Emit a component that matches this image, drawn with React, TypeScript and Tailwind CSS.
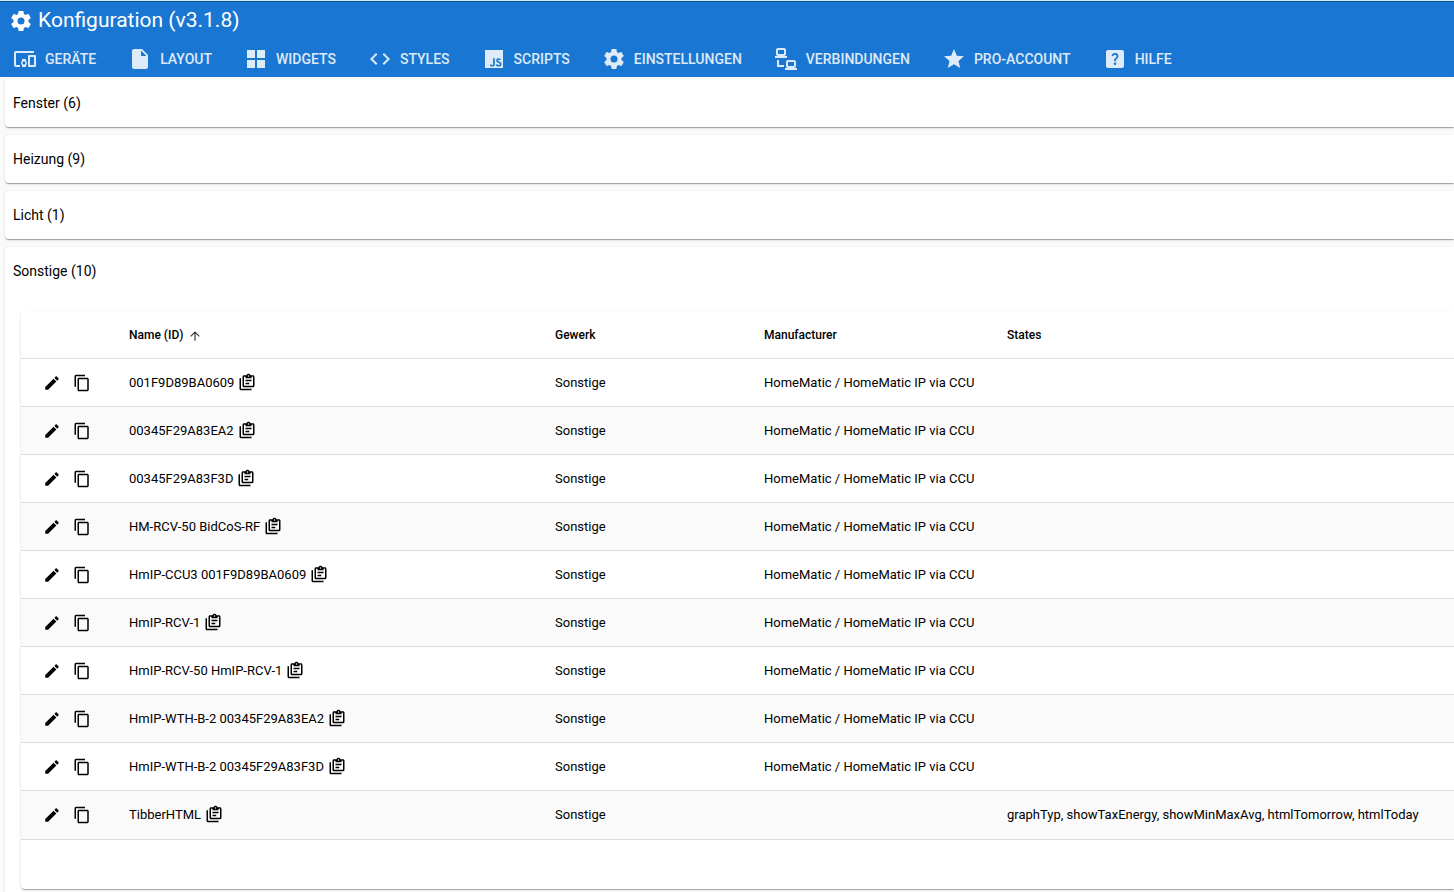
import { useState } from 'react';
import type { ReactNode } from 'react';
import {
  MdArrowUpward,
  MdCode,
  MdContentCopy,
  MdDevicesOther,
  MdEdit,
  MdHelpCenter,
  MdStar,
} from 'react-icons/md';
import { SiJavascript } from 'react-icons/si';

interface Device {
  name: string;
  manufacturer: string;
  states: string;
}

interface Group {
  name: string;
  count: number;
  devices: Device[];
}

const CCU = 'HomeMatic / HomeMatic IP via CCU';

const groups: Group[] = [
  { name: 'Fenster', count: 6, devices: [] },
  { name: 'Heizung', count: 9, devices: [] },
  { name: 'Licht', count: 1, devices: [] },
  {
    name: 'Sonstige',
    count: 10,
    devices: [
      { name: '001F9D89BA0609', manufacturer: CCU, states: '' },
      { name: '00345F29A83EA2', manufacturer: CCU, states: '' },
      { name: '00345F29A83F3D', manufacturer: CCU, states: '' },
      { name: 'HM-RCV-50 BidCoS-RF', manufacturer: CCU, states: '' },
      { name: 'HmIP-CCU3 001F9D89BA0609', manufacturer: CCU, states: '' },
      { name: 'HmIP-RCV-1', manufacturer: CCU, states: '' },
      { name: 'HmIP-RCV-50 HmIP-RCV-1', manufacturer: CCU, states: '' },
      { name: 'HmIP-WTH-B-2 00345F29A83EA2', manufacturer: CCU, states: '' },
      { name: 'HmIP-WTH-B-2 00345F29A83F3D', manufacturer: CCU, states: '' },
      {
        name: 'TibberHTML',
        manufacturer: '',
        states: 'graphTyp, showTaxEnergy, showMinMaxAvg, htmlTomorrow, htmlToday',
      },
    ],
  },
];

const icons = {
  cog: 'M12,15.5A3.5,3.5 0 0,1 8.5,12A3.5,3.5 0 0,1 12,8.5A3.5,3.5 0 0,1 15.5,12A3.5,3.5 0 0,1 12,15.5M19.43,12.97C19.47,12.65 19.5,12.33 19.5,12C19.5,11.67 19.47,11.34 19.43,11L21.54,9.37C21.73,9.22 21.78,8.95 21.66,8.73L19.66,5.27C19.54,5.05 19.27,4.96 19.05,5.05L16.56,6.05C16.04,5.66 15.5,5.32 14.87,5.07L14.5,2.42C14.46,2.18 14.25,2 14,2H10C9.75,2 9.54,2.18 9.5,2.42L9.13,5.07C8.5,5.32 7.96,5.66 7.44,6.05L4.95,5.05C4.73,4.96 4.46,5.05 4.34,5.27L2.34,8.73C2.21,8.95 2.27,9.22 2.46,9.37L4.57,11C4.53,11.34 4.5,11.67 4.5,12C4.5,12.33 4.53,12.65 4.57,12.97L2.46,14.63C2.27,14.78 2.21,15.05 2.34,15.27L4.34,18.73C4.46,18.95 4.73,19.03 4.95,18.95L7.44,17.94C7.96,18.34 8.5,18.68 9.13,18.93L9.5,21.58C9.54,21.82 9.75,22 10,22H14C14.25,22 14.46,21.82 14.5,21.58L14.87,18.93C15.5,18.67 16.04,18.34 16.56,17.94L19.05,18.95C19.27,19.03 19.54,18.95 19.66,18.73L21.66,15.27C21.78,15.05 21.73,14.78 21.54,14.63L19.43,12.97Z',
  file: 'M13,9V3.5L18.5,9M6,2C4.89,2 4,2.89 4,4V20A2,2 0 0,0 6,22H18A2,2 0 0,0 20,20V8L14,2H6Z',
  grid: 'M3,11H11V3H3M3,21H11V13H3M13,21H21V13H13M13,3V11H21V3',
  lan: 'M4,1C2.89,1 2,1.89 2,3V7C2,8.11 2.89,9 4,9H1V11H13V9H10C11.11,9 12,8.11 12,7V3C12,1.89 11.11,1 10,1H4M4,3H10V7H4V3M3,13V18L3,20H10V18H5V13H3M14,13C12.89,13 12,13.89 12,15V19C12,20.11 12.89,21 14,21H11V23H23V21H20C21.11,21 22,20.11 22,19V15C22,13.89 21.11,13 20,13H14M14,15H20V19H14V15Z',
  clipboard:
    'M4 7V21H18V23H4C2.9 23 2 22.1 2 21V7H4M20 3C21.1 3 22 3.9 22 5V17C22 18.1 21.1 19 20 19H8C6.9 19 6 18.1 6 17V5C6 3.9 6.9 3 8 3H11.18C11.6 1.84 12.7 1 14 1C15.3 1 16.4 1.84 16.82 3H20M14 3C13.45 3 13 3.45 13 4C13 4.55 13.45 5 14 5C14.55 5 15 4.55 15 4C15 3.45 14.55 3 14 3M10 7V5H8V17H20V5H18V7M15 15H10V13H15M18 11H10V9H18V11Z',
};

function Icon({ path, className }: { path: string; className: string }) {
  return (
    <svg viewBox="0 0 24 24" fill="currentColor" className={className} aria-hidden="true">
      <path d={path} />
    </svg>
  );
}

const tabs: { label: string; icon: ReactNode }[] = [
  { label: 'Geräte', icon: <MdDevicesOther className="size-6" /> },
  { label: 'Layout', icon: <Icon path={icons.file} className="size-6" /> },
  { label: 'Widgets', icon: <Icon path={icons.grid} className="size-6" /> },
  { label: 'Styles', icon: <MdCode className="size-6" /> },
  { label: 'Scripts', icon: <SiJavascript className="m-[3px] size-[18px]" /> },
  { label: 'Einstellungen', icon: <Icon path={icons.cog} className="size-6" /> },
  { label: 'Verbindungen', icon: <Icon path={icons.lan} className="size-6" /> },
  { label: 'Pro-Account', icon: <MdStar className="size-6" /> },
  { label: 'Hilfe', icon: <MdHelpCenter className="size-6" /> },
];

function DeviceTable({ devices }: { devices: Device[] }) {
  return (
    <div className="rounded-l bg-white pb-[49px] shadow-[0_2px_1px_-1px_rgba(0,0,0,0.2),0_1px_1px_rgba(0,0,0,0.14),0_1px_3px_rgba(0,0,0,0.12)]">
      <table className="w-full table-fixed border-separate border-spacing-0 text-left text-[13px] whitespace-nowrap">
        <colgroup>
          <col className="w-[92px]" />
          <col className="w-[426px]" />
          <col className="w-[209px]" />
          <col className="w-[243px]" />
          <col />
        </colgroup>
        <thead>
          <tr className="h-12 text-xs [&>th]:border-b [&>th]:border-black/12 [&>th]:px-4 [&>th]:font-medium">
            <th aria-label="Aktionen" />
            <th aria-sort="ascending">
              <button className="flex items-center gap-[5px]">
                Name (ID)
                <MdArrowUpward className="mt-0.5 size-[14px] text-black/80" />
              </button>
            </th>
            <th>Gewerk</th>
            <th>Manufacturer</th>
            <th>States</th>
          </tr>
        </thead>
        <tbody>
          {devices.map(device => (
            <tr
              key={device.name}
              className="h-12 last:h-[49px] even:bg-[#fafafa] [&>td]:border-b [&>td]:border-black/12 [&>td]:px-4"
            >
              <td>
                <div className="ml-1.5 flex gap-3">
                  <button aria-label="Bearbeiten">
                    <MdEdit className="size-[18px]" />
                  </button>
                  <button aria-label="Kopieren">
                    <MdContentCopy className="size-[18px]" />
                  </button>
                </div>
              </td>
              <td>
                <div className="flex items-center gap-1">
                  {device.name}
                  <button aria-label="ID kopieren" className="pb-0.5">
                    <Icon path={icons.clipboard} className="size-[18px]" />
                  </button>
                </div>
              </td>
              <td>Sonstige</td>
              <td>{device.manufacturer}</td>
              <td>{device.states}</td>
            </tr>
          ))}
        </tbody>
      </table>
    </div>
  );
}

export default function App() {
  const [openGroup, setOpenGroup] = useState('Sonstige');

  return (
    <div className="min-h-screen bg-[#fafafa] font-['Roboto',sans-serif] text-black">
      <header className="border-t border-[#cdeef5] bg-[#1976d2] text-white">
        <div className="mb-0.5 flex h-[38px] items-center gap-[5px] border-t border-[#0f4f92] pl-[9px]">
          <Icon path={icons.cog} className="size-6" />
          <h1 className="text-[21px]">Konfiguration (v3.1.8)</h1>
        </div>
        <nav className="flex h-9 items-center gap-8 pl-[13px]">
          {tabs.map(tab => (
            <button
              key={tab.label}
              className="flex items-center gap-2 text-sm font-medium text-white/85 uppercase"
            >
              {tab.icon}
              {tab.label}
            </button>
          ))}
        </nav>
      </header>

      <main className="flex flex-col gap-2 pt-[2px] pl-[5px]">
        {groups.map(group => {
          const isOpen = group.name === openGroup && group.devices.length > 0;

          return (
            <section
              key={group.name}
              className="rounded-l bg-white shadow-[0_2px_1px_-1px_rgba(0,0,0,0.2),0_1px_1px_rgba(0,0,0,0.14),0_1px_3px_rgba(0,0,0,0.12)]"
            >
              <button
                aria-expanded={isOpen}
                onClick={() => setOpenGroup(isOpen ? '' : group.name)}
                className="flex h-12 w-full items-center px-2 text-sm"
              >
                {group.name} ({group.count})
              </button>
              {isOpen && (
                <div className="pt-4 pb-4 pl-4">
                  <DeviceTable devices={group.devices} />
                </div>
              )}
            </section>
          );
        })}
      </main>
    </div>
  );
}
